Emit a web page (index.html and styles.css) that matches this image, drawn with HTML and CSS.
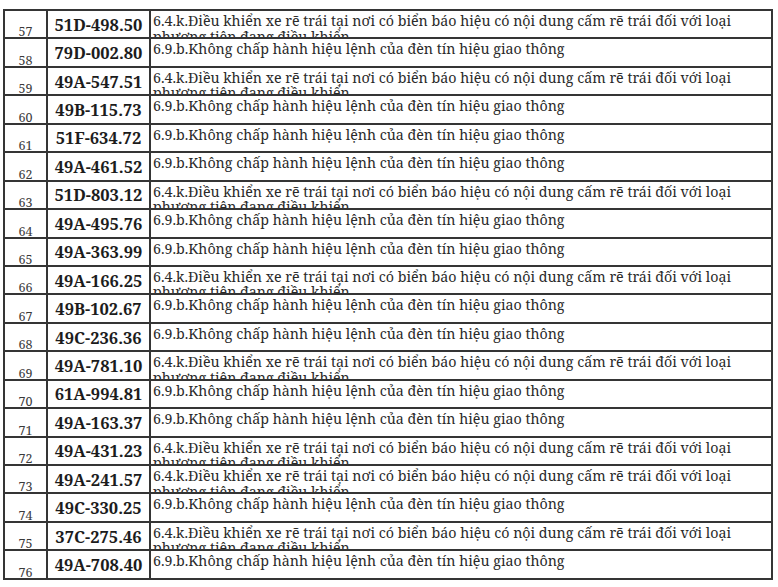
FILE: index.html
```html
<!DOCTYPE html>
<html lang="vi">
<head>
<meta charset="utf-8">
<link rel="stylesheet" href="styles.css">
</head>
<body>
<div class="sheet">
  <div class="row"><div class="no">57</div><div class="plate">51D-498.50</div><div class="desc">6.4.k.Điều khiển xe rẽ trái tại nơi có biển báo hiệu có nội dung cấm rẽ trái đối với loại phương tiện đang điều khiển</div></div>
  <div class="row"><div class="no">58</div><div class="plate">79D-002.80</div><div class="desc">6.9.b.Không chấp hành hiệu lệnh của đèn tín hiệu giao thông</div></div>
  <div class="row"><div class="no">59</div><div class="plate">49A-547.51</div><div class="desc">6.4.k.Điều khiển xe rẽ trái tại nơi có biển báo hiệu có nội dung cấm rẽ trái đối với loại phương tiện đang điều khiển</div></div>
  <div class="row"><div class="no">60</div><div class="plate">49B-115.73</div><div class="desc">6.9.b.Không chấp hành hiệu lệnh của đèn tín hiệu giao thông</div></div>
  <div class="row"><div class="no">61</div><div class="plate">51F-634.72</div><div class="desc">6.9.b.Không chấp hành hiệu lệnh của đèn tín hiệu giao thông</div></div>
  <div class="row"><div class="no">62</div><div class="plate">49A-461.52</div><div class="desc">6.9.b.Không chấp hành hiệu lệnh của đèn tín hiệu giao thông</div></div>
  <div class="row"><div class="no">63</div><div class="plate">51D-803.12</div><div class="desc">6.4.k.Điều khiển xe rẽ trái tại nơi có biển báo hiệu có nội dung cấm rẽ trái đối với loại phương tiện đang điều khiển</div></div>
  <div class="row"><div class="no">64</div><div class="plate">49A-495.76</div><div class="desc">6.9.b.Không chấp hành hiệu lệnh của đèn tín hiệu giao thông</div></div>
  <div class="row"><div class="no">65</div><div class="plate">49A-363.99</div><div class="desc">6.9.b.Không chấp hành hiệu lệnh của đèn tín hiệu giao thông</div></div>
  <div class="row"><div class="no">66</div><div class="plate">49A-166.25</div><div class="desc">6.4.k.Điều khiển xe rẽ trái tại nơi có biển báo hiệu có nội dung cấm rẽ trái đối với loại phương tiện đang điều khiển</div></div>
  <div class="row"><div class="no">67</div><div class="plate">49B-102.67</div><div class="desc">6.9.b.Không chấp hành hiệu lệnh của đèn tín hiệu giao thông</div></div>
  <div class="row"><div class="no">68</div><div class="plate">49C-236.36</div><div class="desc">6.9.b.Không chấp hành hiệu lệnh của đèn tín hiệu giao thông</div></div>
  <div class="row"><div class="no">69</div><div class="plate">49A-781.10</div><div class="desc">6.4.k.Điều khiển xe rẽ trái tại nơi có biển báo hiệu có nội dung cấm rẽ trái đối với loại phương tiện đang điều khiển</div></div>
  <div class="row"><div class="no">70</div><div class="plate">61A-994.81</div><div class="desc">6.9.b.Không chấp hành hiệu lệnh của đèn tín hiệu giao thông</div></div>
  <div class="row"><div class="no">71</div><div class="plate">49A-163.37</div><div class="desc">6.9.b.Không chấp hành hiệu lệnh của đèn tín hiệu giao thông</div></div>
  <div class="row"><div class="no">72</div><div class="plate">49A-431.23</div><div class="desc">6.4.k.Điều khiển xe rẽ trái tại nơi có biển báo hiệu có nội dung cấm rẽ trái đối với loại phương tiện đang điều khiển</div></div>
  <div class="row"><div class="no">73</div><div class="plate">49A-241.57</div><div class="desc">6.4.k.Điều khiển xe rẽ trái tại nơi có biển báo hiệu có nội dung cấm rẽ trái đối với loại phương tiện đang điều khiển</div></div>
  <div class="row"><div class="no">74</div><div class="plate">49C-330.25</div><div class="desc">6.9.b.Không chấp hành hiệu lệnh của đèn tín hiệu giao thông</div></div>
  <div class="row"><div class="no">75</div><div class="plate">37C-275.46</div><div class="desc">6.4.k.Điều khiển xe rẽ trái tại nơi có biển báo hiệu có nội dung cấm rẽ trái đối với loại phương tiện đang điều khiển</div></div>
  <div class="row"><div class="no">76</div><div class="plate">49A-708.40</div><div class="desc">6.9.b.Không chấp hành hiệu lệnh của đèn tín hiệu giao thông</div></div>
</div>
</body>
</html>
```
FILE: styles.css
```css
html, body {
  margin: 0;
  padding: 0;
  background: #ffffff;
}

body {
  font-family: "Noto Serif", "DejaVu Serif", serif;
  color: #262626;
}

.sheet {
  width: 768px;
  margin: 9px 0 0 3px;
  border-top: 2px solid #353535;
  border-left: 2px solid #353535;
}

.row {
  display: grid;
  grid-template-columns: 43px 103px 622px;
  height: 28.45px;
  box-sizing: border-box;
}

.row > div {
  border-right: 2px solid #353535;
  border-bottom: 2px solid #353535;
  overflow: hidden;
  box-sizing: border-box;
}

.no {
  display: flex;
  align-items: flex-end;
  justify-content: center;
  font-size: 12.5px;
  line-height: 11px;
  padding-bottom: 0;
  color: #3a3a3a;
}

.plate {
  display: flex;
  align-items: center;
  justify-content: center;
  font-size: 16.5px;
  font-weight: 700;
  color: #1c1c1c;
}

.desc {
  font-size: 14.25px;
  line-height: 15.5px;
  padding: 2px 2px 0 2px;
  color: #2a2a2a;
}
```
